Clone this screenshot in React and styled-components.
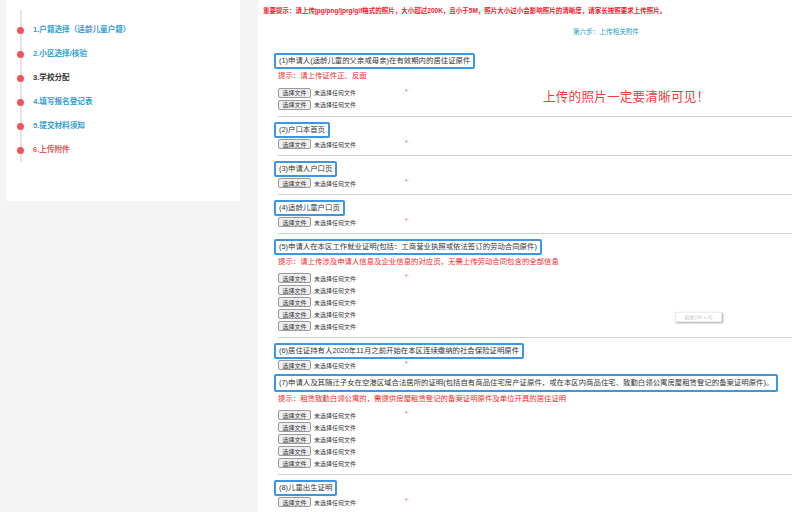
import React from "react";
import styled, { createGlobalStyle } from "styled-components";

const GlobalStyle = createGlobalStyle`
	html, body {
		margin: 0;
		padding: 0;
		background: #f4f4f4;
	}
	body {
		font-family: "Liberation Sans", "Noto Sans CJK SC", sans-serif;
	}
`;

const steps = [
	{ label: "1.户籍选择（适龄儿童户籍）", state: "done" },
	{ label: "2.小区选择/核验", state: "done" },
	{ label: "3.学校分配", state: "plain" },
	{ label: "4.填写报名登记表", state: "done" },
	{ label: "5.提交材料须知", state: "done" },
	{ label: "6.上传附件", state: "current" },
];

const sections = [
	{
		title: "(1)申请人(适龄儿童的父亲或母亲)在有效期内的居住证原件",
		hint: "提示：请上传证件正、反面",
		rows: 2,
		note: "上传的照片一定要清晰可见！",
	},
	{ title: "(2)户口本首页", rows: 1 },
	{ title: "(3)申请人户口页", rows: 1 },
	{ title: "(4)适龄儿童户口页", rows: 1 },
	{
		title: "(5)申请人在本区工作就业证明(包括：工商营业执照或依法签订的劳动合同原件)",
		hint: "提示：请上传涉及申请人信息及企业信息的对应页，无需上传劳动合同包含的全部信息",
		rows: 5,
	},
	{
		title: "(6)居住证持有人2020年11月之前开始在本区连续缴纳的社会保险证明原件",
		rows: 1,
		noDivider: true,
	},
	{
		title: "(7)申请人及其随迁子女在空港区域合法居所的证明(包括自有商品住宅房产证原件，或在本区内商品住宅、致勤白领公寓房屋租赁登记的备案证明原件)。",
		hint: "提示：租赁致勤白领公寓的，需提供房屋租赁登记的备案证明原件及单位开具的居住证明",
		rows: 5,
		tall: true,
	},
	{ title: "(8)儿童出生证明", rows: 1 },
];

const FileRows = ({ count }) => {
	const rows = [];
	for (let i = 0; i < count; i++) {
		rows.push(
			<FileRow key={i}>
				<FileInput>
					<PickButton>选择文件</PickButton>
					<FileName>未选择任何文件</FileName>
				</FileInput>
				{i === 0 && <Star>*</Star>}
			</FileRow>
		);
	}
	return <FileList>{rows}</FileList>;
};

const Section = ({ title, hint, rows, note, noDivider, tall }) => {
	return (
		<StyledSection $after={noDivider ? 3 : 0}>
			<TitleBox $tall={tall}>{title}</TitleBox>
			{hint && <Hint>{hint}</Hint>}
			<SectionBody $gap={hint ? 4 : 0}>
				<FileRows count={rows} />
				{note && <BigNote>{note}</BigNote>}
			</SectionBody>
			{!noDivider && <Divider />}
		</StyledSection>
	);
};

const App = () => {
	return (
		<>
			<GlobalStyle />
			<Page>
				<Sidebar>
					<SideCard>
						<Timeline>
							{steps.map((s) => (
								<Step key={s.label} $state={s.state}>
									{s.label}
								</Step>
							))}
						</Timeline>
					</SideCard>
				</Sidebar>
				<Main>
					<Notice>
						重要提示：请上传jpg/png/jprg/gif格式的照片，大小超过200K，且小于5M，照片大小过小会影响照片的清晰度，请家长按照要求上传照片。
					</Notice>
					<StepTitle>第六步：上传相关附件</StepTitle>
					{sections.map((s) => (
						<Section key={s.title} {...s} />
					))}
					<ShotBadge>截图(Alt + A)</ShotBadge>
				</Main>
			</Page>
		</>
	);
};

const Page = styled.div`
	display: flex;
	width: 800px;
	height: 512px;
	overflow: hidden;
`;

const Sidebar = styled.div`
	width: 240px;
	padding-left: 6px;
	box-sizing: border-box;
	margin-right: 18px;
	flex-shrink: 0;
`;

const SideCard = styled.div`
	background: #fff;
	height: 201px;
	padding-top: 10px;
	box-sizing: border-box;
`;

const Timeline = styled.ul`
	list-style: none;
	margin: 0 0 0 14px;
	padding: 8px 0 0 0;
	border-left: 2px solid #e3e3e3;
`;

const Step = styled.li`
	position: relative;
	height: 24px;
	line-height: 24px;
	padding-left: 11px;
	font-size: 7.6px;
	font-weight: bold;
	color: ${(p) =>
		p.$state === "current" ? "#f4505a" : p.$state === "plain" ? "#333" : "#2f9fd2"};
	&::before {
		content: "";
		position: absolute;
		left: -5px;
		top: 8.5px;
		width: 7px;
		height: 7px;
		border-radius: 50%;
		background: #f0525a;
	}
`;

const Main = styled.div`
	position: relative;
	flex: 1;
	background: #fff;
	padding: 6px 8px 0 0;
	box-sizing: border-box;
`;

const Notice = styled.div`
	padding-left: 5px;
	font-size: 6.5px;
	line-height: 9px;
	font-weight: bold;
	color: #f2212b;
`;

const StepTitle = styled.div`
	margin-top: 12px;
	padding-left: 315px;
	font-size: 6.6px;
	line-height: 10px;
	color: #1f9ec0;
	margin-bottom: 16px;
`;

const StyledSection = styled.div`
	padding-left: 20px;
	margin-bottom: ${(p) => p.$after}px;
`;

const TitleBox = styled.div`
	width: fit-content;
	margin-left: -4px;
	padding: 0 3px;
	border: 2px solid #3b97e3;
	border-radius: 2px;
	font-size: 7.4px;
	line-height: ${(p) => (p.$tall ? "14px" : "12px")};
	color: #333;
	white-space: nowrap;
`;

const Hint = styled.div`
	margin-top: 1px;
	font-size: 7.4px;
	line-height: 12px;
	color: #f52a2a;
`;

const SectionBody = styled.div`
	display: flex;
	align-items: center;
	margin-top: ${(p) => p.$gap}px;
`;

const FileList = styled.div`
	width: 265px;
	flex-shrink: 0;
`;

const FileRow = styled.div`
	display: flex;
	align-items: center;
	height: 12px;
	font-size: 6px;
`;

const FileInput = styled.div`
	display: flex;
	align-items: center;
	gap: 3px;
	width: 127px;
`;

const PickButton = styled.span`
	display: inline-flex;
	align-items: center;
	justify-content: center;
	width: 33px;
	height: 10px;
	box-sizing: border-box;
	background: #efefef;
	border: 1px solid #9a9a9a;
	border-radius: 2px;
	font-size: 6px;
	color: #333;
`;

const FileName = styled.span`
	font-size: 6px;
	color: #333;
`;

const Star = styled.span`
	font-size: 7px;
	line-height: 7px;
	color: #f05a5a;
	margin-top: -3px;
`;

const BigNote = styled.div`
	font-size: 12.6px;
	color: #f43a3a;
	letter-spacing: 0.2px;
	margin-bottom: 6px;
`;

const Divider = styled.div`
	height: 1px;
	background: #d2d2d2;
	margin: 5px 0 5px 0;
`;

const ShotBadge = styled.div`
	position: absolute;
	left: 417px;
	top: 312px;
	width: 47px;
	height: 10px;
	box-sizing: border-box;
	background: #fff;
	border: 1px solid #eee;
	box-shadow: 1px 1px 2px rgba(0, 0, 0, 0.35);
	font-size: 5px;
	line-height: 8px;
	text-align: center;
	color: #ccc;
`;

export default App;
